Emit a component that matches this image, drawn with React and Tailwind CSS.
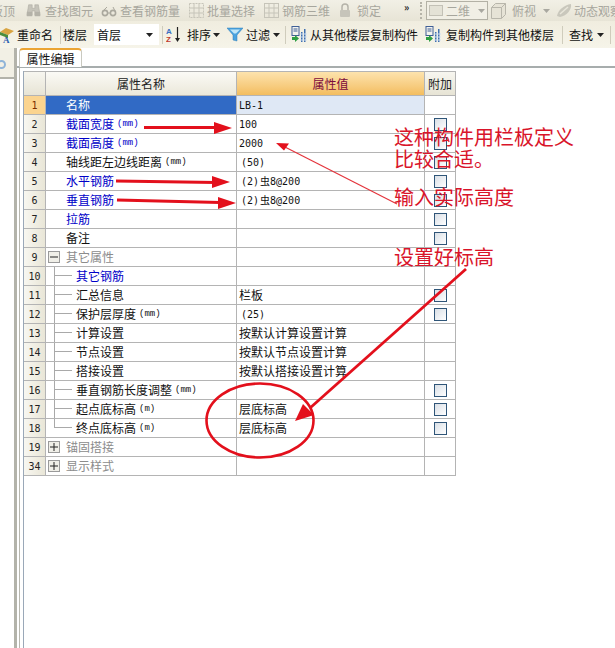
// App.jsx — 属性编辑 panel with red annotation overlay

const SONG = { fontFamily: '"Noto Sans CJK SC", "Liberation Sans", sans-serif' };

const Latin = ({ children, className = '' }) => (
  <span className={`font-['DejaVu_Sans_Mono',monospace] text-[10px] ${className}`}>{children}</span>
);

const Rebar = () => (
  <Latin className="ml-[2px]">(2)<span className="ml-[1px] font-['Noto_Sans_CJK_SC'] text-[10px]">虫</span>8@200</Latin>
);

const ROWS = [
  { n: '1', label: '名称', value: <Latin>LB-1</Latin>, active: true },
  { n: '2', label: '截面宽度', unit: '(mm)', blue: true, value: <Latin>100</Latin>, check: true },
  { n: '3', label: '截面高度', unit: '(mm)', blue: true, value: <Latin>2000</Latin>, check: true },
  { n: '4', label: '轴线距左边线距离', unit: '(mm)', value: <Latin className="ml-[2px]">(50)</Latin>, check: true },
  { n: '5', label: '水平钢筋', blue: true, value: <Rebar />, check: true },
  { n: '6', label: '垂直钢筋', blue: true, value: <Rebar />, check: true },
  { n: '7', label: '拉筋', blue: true, check: true },
  { n: '8', label: '备注', check: true },
  { n: '9', label: '其它属性', group: 'minus' },
  { n: '10', label: '其它钢筋', blue: true, tree: true },
  { n: '11', label: '汇总信息', tree: true, value: '栏板', check: true },
  { n: '12', label: '保护层厚度', unit: '(mm)', tree: true, value: <Latin className="ml-[2px]">(25)</Latin>, check: true },
  { n: '13', label: '计算设置', tree: true, value: '按默认计算设置计算' },
  { n: '14', label: '节点设置', tree: true, value: '按默认节点设置计算' },
  { n: '15', label: '搭接设置', tree: true, value: '按默认搭接设置计算' },
  { n: '16', label: '垂直钢筋长度调整', unit: '(mm)', tree: true, check: true },
  { n: '17', label: '起点底标高', unit: '(m)', tree: true, value: '层底标高', check: true },
  { n: '18', label: '终点底标高', unit: '(m)', tree: true, last: true, value: '层底标高', check: true },
  { n: '19', label: '锚固搭接', group: 'plus' },
  { n: '34', label: '显示样式', group: 'plus' },
];

const Sep = ({ className = '' }) => <span className={`h-[18px] w-px shrink-0 bg-[#cfccbc] ${className}`} />;
const Caret = ({ muted }) => (
  <svg width="7" height="4" viewBox="0 0 7 4" className="shrink-0">
    <path d="M0 0h7L3.5 4z" fill={muted ? '#a9a8a0' : '#222'} />
  </svg>
);

function Binoculars() {
  return (
    <svg width="15" height="15" viewBox="0 0 17 15" className="shrink-0">
      <path d="M3 1h4v4h3V1h4l2 12h-6V8H7v5H1z" fill="#c6c4ba" stroke="#aaa89e" strokeWidth=".6" />
      <rect x="1" y="9" width="6" height="5" fill="#b4b2a8" />
      <rect x="10" y="9" width="6" height="5" fill="#b4b2a8" />
    </svg>
  );
}

function Glasses() {
  return (
    <svg width="16" height="12" viewBox="0 0 16 12" className="shrink-0" fill="none" stroke="#aaa89e" strokeWidth="1.6">
      <circle cx="4" cy="8" r="2.6" />
      <circle cx="12" cy="8" r="2.6" />
      <path d="M6.5 8h3M2 6l4-4M14 6l-2-4" strokeWidth="1" />
    </svg>
  );
}

function GridIcon({ wide }) {
  return (
    <svg width="17" height="17" viewBox="0 0 17 17" className="shrink-0" fill="none" stroke="#c6c4b9" strokeWidth="1">
      <rect x="1.5" y="1.5" width="14" height="14" strokeDasharray={wide ? undefined : '2 1'} />
      <path d="M6 1.5v14M11 1.5v14M1.5 6h14M1.5 11h14" />
    </svg>
  );
}

function Lock() {
  return (
    <svg width="14" height="15" viewBox="0 0 14 15" className="shrink-0">
      <path d="M4 7V4a3 3 0 0 1 6 0v3" fill="none" stroke="#b5b3a9" strokeWidth="1.5" />
      <rect x="2" y="7" width="10" height="7" rx="1" fill="#c6c4ba" />
    </svg>
  );
}

function Cube() {
  return (
    <svg width="17" height="18" viewBox="0 0 17 18" className="shrink-0" fill="#e6e3d6" stroke="#b8b6ab">
      <path d="M1.5 5.5l4-4h10v11l-4 4h-10z" />
      <path d="M1.5 5.5h10v11M11.5 5.5l4-4" fill="none" />
    </svg>
  );
}

function Orbit() {
  return (
    <svg width="18" height="16" viewBox="0 0 18 16" className="shrink-0">
      <path d="M2 13C3 7 9 2 16 1c1 5-4 12-11 13z" fill="#c9c7bc" />
      <path d="M5 11l8-7" stroke="#e8e6da" strokeWidth="1.5" />
    </svg>
  );
}

function RenameIcon() {
  return (
    <svg width="14" height="18" viewBox="0 0 14 18" className="shrink-0">
      <path d="M0 6l6-4 8 3-6 4z" fill="#d9a441" />
      <path d="M0 6l8 3v3L0 9z" fill="#4b8d3b" />
      <text x="3" y="17" fontSize="9" fontWeight="700" fill="#2a5db0" fontFamily="Liberation Serif">A</text>
    </svg>
  );
}

function SortIcon() {
  return (
    <svg width="16" height="17" viewBox="0 0 16 17" className="shrink-0">
      <text x="0" y="8" fontSize="8" fontWeight="700" fill="#3a6fc2" fontFamily="Liberation Sans">A</text>
      <text x="0" y="16" fontSize="8" fontWeight="700" fill="#c0392b" fontFamily="Liberation Sans">Z</text>
      <path d="M11.5 1v12" stroke="#222" strokeWidth="1.2" />
      <path d="M9 12h5l-2.5 4z" fill="#222" />
    </svg>
  );
}

function Funnel() {
  return (
    <svg width="16" height="15" viewBox="0 0 16 15" className="shrink-0">
      <path d="M0 1h16L10 8v6l-4-1V8z" fill="#4aa3df" stroke="#2f7fb8" strokeWidth=".5" />
      <path d="M3 2.5h10L9 6.5H7z" fill="#bfe6f8" />
    </svg>
  );
}

function CopyIcon() {
  return (
    <svg width="16" height="17" viewBox="0 0 16 17" className="shrink-0">
      <rect x="1" y="0.5" width="7" height="9" fill="#f3f3ee" stroke="#3f5f96" />
      <path d="M2.5 3h4M2.5 5h4" stroke="#3f5f96" />
      <path d="M1 11h3V9l4 3.5L4 16v-2H1z" fill="#2f9e44" />
      <path d="M10 6h1.5v10H10zM13 3h1.5v13H13z" fill="#3f6fb0" />
      <path d="M9 8h7M9 11h7M9 14h7" stroke="#cfe0f2" />
    </svg>
  );
}

const Dim = ({ children, className = '' }) => (
  <span className={`shrink-0 whitespace-nowrap text-[#a7a69d] ${className}`}>{children}</span>
);

function TopBar() {
  return (
    <div className="flex h-[21px] items-center overflow-hidden whitespace-nowrap bg-gradient-to-b from-[#f2f0e6] to-[#e7e4d6] text-[12px]">
      <Dim className="-ml-[9px] w-[24px]">板顶</Dim>
      <span className="ml-[11px] flex shrink-0"><Binoculars /></span>
      <Dim className="ml-[4px]">查找图元</Dim>
      <span className="ml-[8px] flex shrink-0"><Glasses /></span>
      <Dim className="ml-[3px]">查看钢筋量</Dim>
      <span className="ml-[8px] flex shrink-0"><GridIcon /></span>
      <Dim className="ml-[2px]">批量选择</Dim>
      <span className="ml-[8px] flex shrink-0"><GridIcon wide /></span>
      <Dim className="ml-[2px]">钢筋三维</Dim>
      <span className="ml-[8px] flex shrink-0"><Lock /></span>
      <Dim className="ml-[5px]">锁定</Dim>
      <span className="ml-[23px] -mt-[8px] w-[8px] shrink-0 text-[10px] font-bold text-[#222]">»</span>
      <span className="ml-[8px] h-[17px] shrink-0 border-l-2 border-dotted border-[#b5b3a8]" />
      <div className="ml-[4px] flex h-[19px] w-[62px] shrink-0 items-center gap-[3px] border border-[#b3b1a5] bg-[#f1efe5] pl-[2px]">
        <span className="h-[11px] w-[14px] border border-[#c3c1b6] bg-[#e4e2d6]" />
        <Dim>二维</Dim>
        <span className="ml-[5px] flex"><Caret muted /></span>
      </div>
      <span className="ml-[2px] flex shrink-0"><Cube /></span>
      <Dim className="ml-[5px]">俯视</Dim>
      <span className="ml-[7px] flex shrink-0"><Caret muted /></span>
      <span className="ml-[5px] flex shrink-0"><Orbit /></span>
      <Dim className="ml-[1px]">动态观察</Dim>
    </div>
  );
}

function ActionBar() {
  return (
    <div className="flex h-[27px] items-center overflow-hidden whitespace-nowrap bg-gradient-to-b from-[#f0eddf] to-[#f6f4e9] text-[12px] text-[#111]">
      <RenameIcon />
      <span className="ml-[3px]">重命名</span>
      <Sep className="ml-[7px] mr-[2px]" />
      <span>楼层</span>
      <div className="ml-[7px] flex h-[21px] w-[65px] shrink-0 items-center justify-between bg-white pl-[3px] pr-[6px]">
        <span>首层</span>
        <Caret />
      </div>
      <Sep className="ml-[3px] mr-[3px]" />
      <SortIcon />
      <span className="ml-[5px]">排序</span>
      <span className="ml-[2px] flex shrink-0"><Caret /></span>
      <span className="ml-[7px] flex shrink-0"><Funnel /></span>
      <span className="ml-[3px]">过滤</span>
      <span className="ml-[3px] flex shrink-0"><Caret /></span>
      <Sep className="ml-[5px]" />
      <span className="ml-[5px] flex shrink-0"><CopyIcon /></span>
      <span className="ml-[3px]">从其他楼层复制构件</span>
      <span className="ml-[7px] flex shrink-0"><CopyIcon /></span>
      <span className="ml-[5px]">复制构件到其他楼层</span>
      <Sep className="ml-[8px]" />
      <span className="ml-[6px]">查找</span>
      <span className="ml-[4px] flex shrink-0"><Caret /></span>
      <Sep className="ml-[6px]" />
    </div>
  );
}

function TreeLines({ last }) {
  return (
    <span className="ml-[8px] flex h-full w-[18px] shrink-0 flex-col">
      <span className="h-1/2 border-b border-l border-[#a9a9a9]" />
      <span className={`h-1/2 border-l ${last ? 'border-transparent' : 'border-[#a9a9a9]'}`} />
    </span>
  );
}

function Toggle({ kind }) {
  return (
    <span className="ml-[2px] flex h-[12px] w-[12px] shrink-0 items-center justify-center border border-[#9a9a9a] bg-[#f0efe8]">
      <svg width="8" height="8" viewBox="0 0 8 8">
        <path d={kind === 'minus' ? 'M0 4h8' : 'M0 4h8M4 0v8'} stroke="#222" />
      </svg>
    </span>
  );
}

function Row({ row }) {
  const numCls = row.active
    ? 'bg-[#fbd48f] text-[#7a2d00]'
    : 'bg-gradient-to-r from-[#f8f7f1] to-[#e9e6d7] text-[#222]';
  let nameCls = 'text-[#111]';
  if (row.active) nameCls = 'bg-[#316ac5] text-white';
  else if (row.blue) nameCls = 'text-[#0000c8]';
  else if (row.group) nameCls = 'text-[#8c8c8c]';

  return (
    <>
      <div className={`flex items-center justify-center border-b border-r border-[#b4b4b4] font-['DejaVu_Sans_Mono',monospace] text-[10px] ${numCls}`}>
        {row.n}
      </div>
      <div className={`flex items-center overflow-hidden whitespace-nowrap border-b border-r border-[#b4b4b4] ${nameCls}`}>
        {row.group && <Toggle kind={row.group} />}
        {row.tree && <TreeLines last={row.last} />}
        <span className={row.group ? 'ml-[6px]' : row.tree ? 'ml-[4px]' : 'ml-[20px]'}>{row.label}</span>
        {row.unit && <span className="ml-[3px] mt-[2px] font-['Liberation_Mono',monospace] text-[9px]">{row.unit}</span>}
      </div>
      <div className={`flex items-center whitespace-nowrap border-b border-r border-[#b4b4b4] pl-[2px] text-[#111] ${row.active ? 'bg-[#dfe8f5]' : ''}`}>
        {row.value}
      </div>
      <div className="flex items-center justify-center border-b border-r border-[#b4b4b4]">
        {row.check && (
          <span className="h-[13px] w-[13px] border border-[#2f5578] bg-gradient-to-br from-[#d9dfe6] to-white" />
        )}
      </div>
    </>
  );
}

function PropertyGrid() {
  return (
    <div className="mt-[3px] grid w-[432px] grid-cols-[22px_191px_188px_31px] grid-rows-[24px_repeat(20,19px)] border-t border-[#b4b4b4] text-[12px]">
      <div className="border-b border-r border-[#b4b4b4] bg-gradient-to-b from-[#f7f6f0] to-[#e7e4d5]" />
      <div className="flex items-center justify-center border-b border-r border-[#b4b4b4] bg-gradient-to-b from-[#fbfaf6] to-[#ebe8da] text-[#222]">属性名称</div>
      <div className="flex items-center justify-center border-b border-r border-[#b4b4b4] bg-gradient-to-b from-[#fde3ad] to-[#f3bd5e] text-[#7c0a3c]">属性值</div>
      <div className="flex items-center justify-center border-b border-r border-[#b4b4b4] bg-gradient-to-b from-[#f7f6f0] to-[#e7e4d5] text-[#222]">附加</div>
      {ROWS.map(row => <Row key={row.n} row={row} />)}
    </div>
  );
}

// 手绘的红色箭头和圈
function Markup() {
  return (
    <svg width="615" height="648" viewBox="0 0 615 648" className="pointer-events-none absolute left-0 top-0">
      <path d="M144 127.5L215 127.5" stroke="#e3101c" strokeWidth="2.8" fill="none" />
      <path d="M214 122l18 6-18 6z" fill="#e3101c" />
      <path d="M116 181l100 1.5" stroke="#e3101c" strokeWidth="2.8" fill="none" />
      <path d="M212 176l18 6-18 6z" fill="#e3101c" />
      <path d="M117 200l103 2.5" stroke="#e3101c" strokeWidth="2.8" fill="none" />
      <path d="M218 197l18 6-18 6z" fill="#e3101c" />
      <path d="M397 204L283 146" stroke="#e4343c" strokeWidth="1.2" fill="none" />
      <path d="M276 143l13 .5-5 7z" fill="#e3101c" />
      <path d="M466 269L310 408" stroke="#e3101c" strokeWidth="2.8" fill="none" />
      <path d="M295 421l8-17 11 11z" fill="#e3101c" />
      <ellipse cx="260" cy="420.5" rx="53.5" ry="37" fill="none" stroke="#e3101c" strokeWidth="2.6" />
    </svg>
  );
}

const Note = ({ className, children }) => (
  <div className={`absolute whitespace-nowrap text-[20px] leading-[22px] text-[#d9142a] ${className}`}>{children}</div>
);

export default function App() {
  return (
    <div className="relative h-[648px] w-[615px] overflow-hidden bg-white" style={SONG}>
      <TopBar />
      <ActionBar />
      <div className="flex h-[600px]">
        <div className="w-[17px] shrink-0 border-r-[3px] border-[#b3b3aa]">
          <div className="h-[31px] border-b-2 border-[#b3b3aa] bg-[#f2f0e5] pt-[12px]">
            <span className="-ml-[3px] block h-[9px] w-[9px] rounded-full border-2 border-[#8fb4d8]" />
          </div>
        </div>
        <div className="flex min-w-0 flex-1 flex-col">
          <div className="h-[20px] shrink-0 border-b-2 border-[#a7adad] pl-[2px]">
            <div className="flex h-[19px] w-[63px] items-center justify-center rounded-t border border-b-0 border-t-2 border-[#c9c9c0] border-t-[#eba433] bg-white text-[12px] text-[#111]">
              属性编辑
            </div>
          </div>
          <div className="ml-[2px] flex-1 border-l border-[#b8b8b0] pl-[3px]">
            <div className="h-full border-l border-[#9aa8b8]">
              <PropertyGrid />
            </div>
          </div>
        </div>
      </div>
      <Markup />
      <Note className="left-[394px] top-[126px]">这种构件用栏板定义</Note>
      <Note className="left-[394px] top-[148px]">比较合适。</Note>
      <Note className="left-[394px] top-[186px]">输入实际高度</Note>
      <Note className="left-[394px] top-[246px]">设置好标高</Note>
    </div>
  );
}
